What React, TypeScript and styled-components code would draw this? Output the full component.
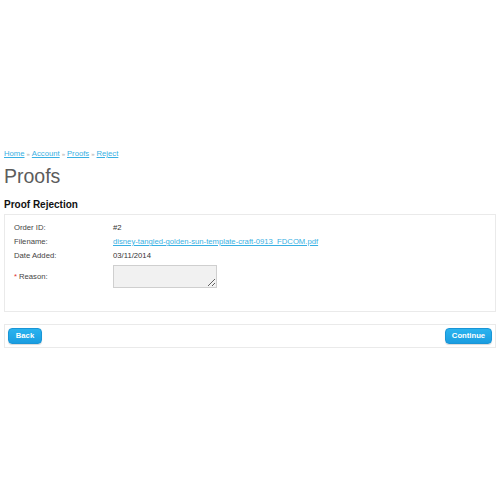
import React from 'react';
import styled, { createGlobalStyle } from 'styled-components';

const GlobalStyle = createGlobalStyle`
  body {
    margin: 0;
    background: #fff;
    font-family: "Liberation Sans", Arial, sans-serif;
    color: #222;
  }
`;

const Page = styled.div`
  padding: 149px 4px 0 4px;
  width: 500px;
  box-sizing: border-box;
`;

const Breadcrumb = styled.div`
  font-size: 7.7px;
  line-height: 10px;
  color: #999;

  a {
    color: #38b0e3;
    text-decoration: underline;
  }
`;

const Separator = styled.span`
  font-size: 6px;
  margin: 0 2px;
  color: #aaa;
`;

const Heading = styled.h1`
  margin: 4px 0 0 0;
  font-size: 19.5px;
  font-weight: normal;
  line-height: 26px;
  color: #5c5c5c;
`;

const SubHeading = styled.h2`
  margin: 10px 0 0 0;
  font-size: 10px;
  line-height: 12px;
  font-weight: bold;
  color: #111;
`;

const Panel = styled.div`
  margin-top: 3px;
  border: 1px solid #eaeaea;
  padding: 6px 9px 0 9px;
  box-sizing: border-box;
  height: 98px;
`;

const Row = styled.div`
  display: grid;
  grid-template-columns: 99px 1fr;
  align-items: start;
  font-size: 7.7px;
  line-height: 14px;
  color: #333;
`;

const Label = styled.div`
  color: #444;
`;

const Required = styled.span`
  color: #e03030;
  margin-right: 2px;
`;

const ValueLink = styled.a`
  color: #38b0e3;
  text-decoration: underline;
`;

const ReasonRow = styled(Row)`
  margin-top: 2px;
  align-items: center;
`;

const Reason = styled.textarea`
  display: block;
  width: 104px;
  height: 23px;
  box-sizing: border-box;
  margin: 0;
  background: #f1f1f1;
  border: 1px solid #cfcfcf;
  resize: both;
  font-size: 7.7px;
`;

const Buttons = styled.div`
  margin-top: 12px;
  border: 1px solid #eaeaea;
  height: 24px;
  box-sizing: border-box;
  padding: 0 3px;
  display: flex;
  align-items: center;
  justify-content: space-between;
`;

const Button = styled.button<{ $wide?: boolean }>`
  height: 16px;
  width: ${(p) => (p.$wide ? '47px' : '34px')};
  padding: 0;
  border: 1px solid #1a95d6;
  border-radius: 4px;
  background: linear-gradient(#2ab3ef, #1a9de0);
  color: #fff;
  font-family: "Liberation Sans", Arial, sans-serif;
  font-weight: bold;
  font-size: 7.7px;
  line-height: 14px;
  box-shadow: 0 1px 1px rgba(0, 0, 0, 0.15);
`;

const App = () => {
  return (
    <>
      <GlobalStyle />
      <Page>
        <Breadcrumb>
          <a href="#">Home</a>
          <Separator>»</Separator>
          <a href="#">Account</a>
          <Separator>»</Separator>
          <a href="#">Proofs</a>
          <Separator>»</Separator>
          <a href="#">Reject</a>
        </Breadcrumb>
        <Heading>Proofs</Heading>
        <SubHeading>Proof Rejection</SubHeading>
        <Panel>
          <Row>
            <Label>Order ID:</Label>
            <div>#2</div>
          </Row>
          <Row>
            <Label>Filename:</Label>
            <div>
              <ValueLink href="#">disney-tangled-golden-sun-template-craft-0913_FDCOM.pdf</ValueLink>
            </div>
          </Row>
          <Row>
            <Label>Date Added:</Label>
            <div>03/11/2014</div>
          </Row>
          <ReasonRow>
            <Label>
              <Required>*</Required>Reason:
            </Label>
            <div>
              <Reason />
            </div>
          </ReasonRow>
        </Panel>
        <Buttons>
          <Button>Back</Button>
          <Button $wide>Continue</Button>
        </Buttons>
      </Page>
    </>
  );
};

export default App;
